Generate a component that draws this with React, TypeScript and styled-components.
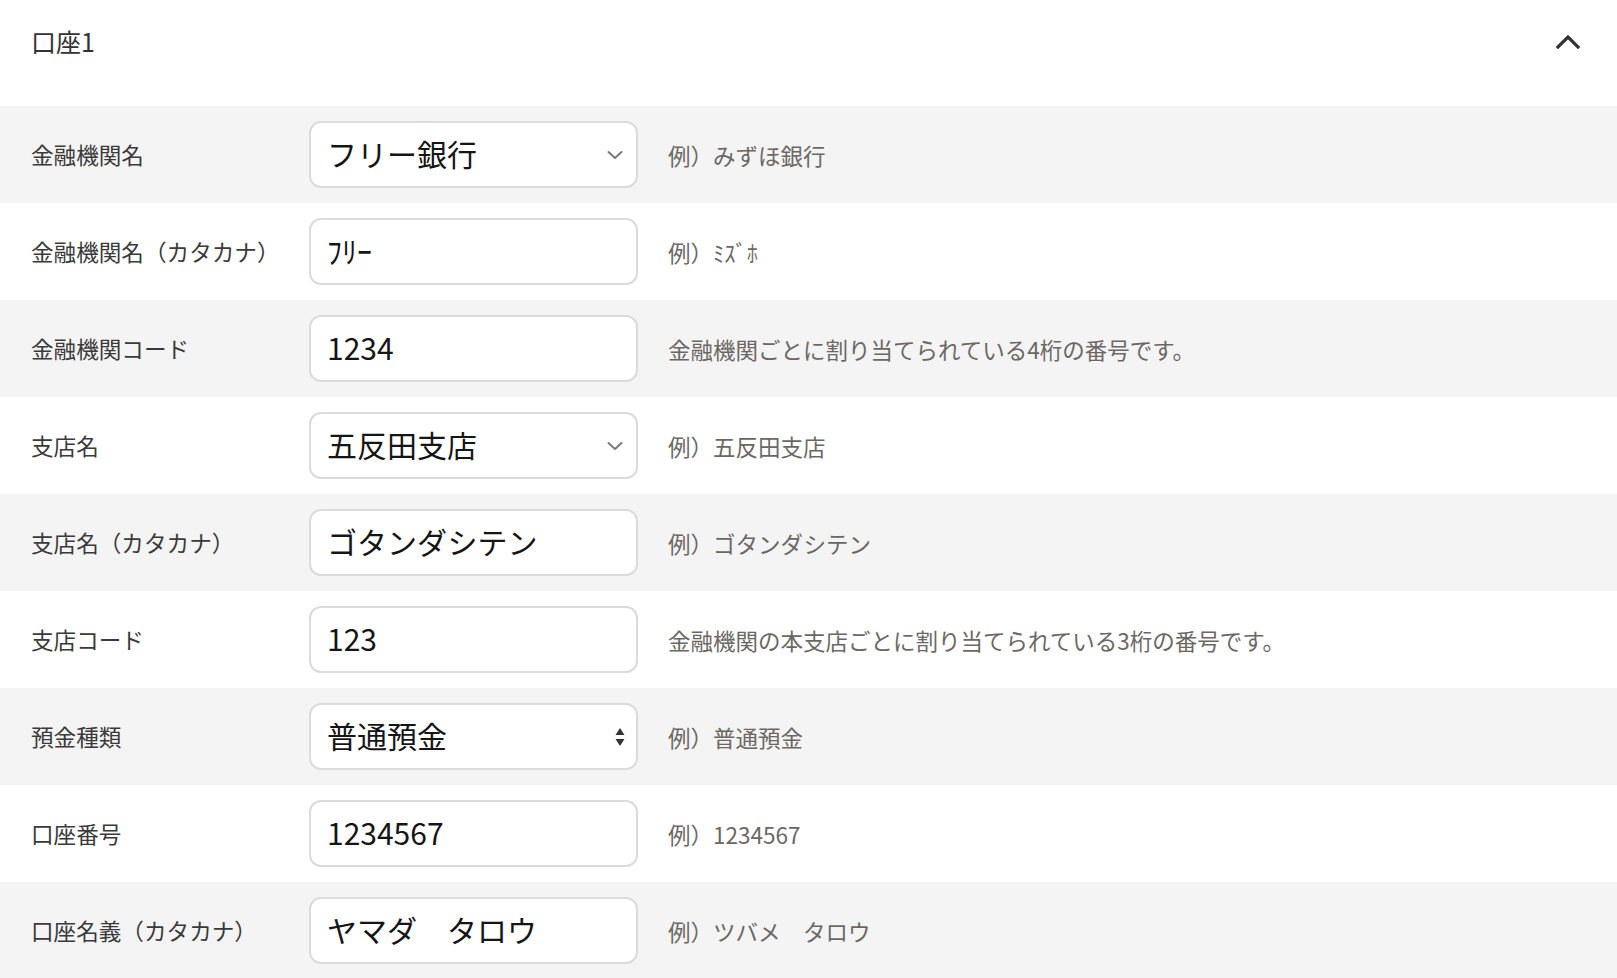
import React from "react";
import styled, { createGlobalStyle } from "styled-components";

const GlobalStyle = createGlobalStyle`
  html, body { margin: 0; padding: 0; background: #ffffff; }
  body {
    font-family: "Noto Sans CJK JP", "Noto Sans", sans-serif;
    color: #333333;
    -webkit-font-smoothing: antialiased;
  }
  * { box-sizing: border-box; }
`;

const Page = styled.div`
  width: 1617px;
  height: 978px;
  overflow: hidden;
  background: #ffffff;
`;

const Header = styled.div`
  display: flex;
  align-items: center;
  justify-content: space-between;
  height: 82px;
  margin-bottom: 24px;
  padding: 0 36px 0 31px;
`;

const Title = styled.h2`
  margin: 0;
  font-size: 25px;
  font-weight: 400;
  color: #333333;
  letter-spacing: 0;
`;

const ToggleButton = styled.button`
  display: flex;
  align-items: center;
  justify-content: center;
  width: 26px;
  height: 26px;
  padding: 0;
  border: none;
  background: transparent;
  cursor: pointer;
  color: #333333;
`;

const Row = styled.div<{ $shaded: boolean }>`
  display: grid;
  grid-template-columns: 278px 329px 1fr;
  align-items: center;
  height: 97px;
  padding-left: 31px;
  background: ${(p) => (p.$shaded ? "#f5f4f4" : "#ffffff")};
`;

const Label = styled.label`
  font-size: 22.6px;
  color: #3a3a3a;
  white-space: nowrap;
`;

const fieldBase = `
  width: 329px;
  height: 67px;
  border: 2px solid #dcdada;
  border-radius: 12px;
  background: #ffffff;
  padding: 0 40px 4px 16px;
  font-family: "Noto Sans CJK JP", "Noto Sans", sans-serif;
  font-size: 30px;
  color: #151515;
  outline: none;
`;

const TextInput = styled.input`
  ${fieldBase}
`;

const SelectWrap = styled.div`
  position: relative;
  width: 329px;
  height: 67px;
`;

const Select = styled.select`
  ${fieldBase}
  appearance: none;
  -webkit-appearance: none;
  display: block;
`;

const SelectIcon = styled.span<{ $right: number }>`
  position: absolute;
  top: 50%;
  right: ${(p) => p.$right}px;
  transform: translateY(-50%);
  display: flex;
  pointer-events: none;
`;

const Hint = styled.div`
  padding-left: 30px;
  font-size: 22.5px;
  color: #6b6864;
  white-space: nowrap;
`;

const ChevronDown = () => (
  <svg width="16" height="9" viewBox="0 0 16 9" fill="none">
    <path d="M1.5 1.5 L8 7.5 L14.5 1.5" stroke="#7a7a7a" strokeWidth="2" strokeLinecap="round" strokeLinejoin="round" />
  </svg>
);

const UpDown = () => (
  <svg width="10" height="20" viewBox="0 0 10 20">
    <path d="M5 1 L9.5 8 L0.5 8 Z" fill="#333333" />
    <path d="M5 19 L9.5 12 L0.5 12 Z" fill="#333333" />
  </svg>
);

const ChevronUp = () => (
  <svg width="24" height="15" viewBox="0 0 24 15" fill="none">
    <path d="M2 13 L12 3 L22 13" stroke="#333333" strokeWidth="3.2" strokeLinecap="square" strokeLinejoin="miter" />
  </svg>
);

type Field =
  | { label: string; kind: "input"; value: string; hint: string }
  | { label: string; kind: "select"; value: string; hint: string; icon: "chevron" | "updown" };

const fields: Field[] = [
  { label: "金融機関名", kind: "select", value: "フリー銀行", hint: "例）みずほ銀行", icon: "chevron" },
  { label: "金融機関名（カタカナ）", kind: "input", value: "ﾌﾘｰ", hint: "例）ﾐｽﾞﾎ" },
  { label: "金融機関コード", kind: "input", value: "1234", hint: "金融機関ごとに割り当てられている4桁の番号です。" },
  { label: "支店名", kind: "select", value: "五反田支店", hint: "例）五反田支店", icon: "chevron" },
  { label: "支店名（カタカナ）", kind: "input", value: "ゴタンダシテン", hint: "例）ゴタンダシテン" },
  { label: "支店コード", kind: "input", value: "123", hint: "金融機関の本支店ごとに割り当てられている3桁の番号です。" },
  { label: "預金種類", kind: "select", value: "普通預金", hint: "例）普通預金", icon: "updown" },
  { label: "口座番号", kind: "input", value: "1234567", hint: "例）1234567" },
  { label: "口座名義（カタカナ）", kind: "input", value: "ヤマダ　タロウ", hint: "例）ツバメ　タロウ" },
];

export default function App() {
  return (
    <Page>
      <GlobalStyle />
      <Header>
        <Title>口座1</Title>
        <ToggleButton aria-label="閉じる">
          <ChevronUp />
        </ToggleButton>
      </Header>
      {fields.map((f, i) => (
        <Row key={f.label} $shaded={i % 2 === 0}>
          <Label>{f.label}</Label>
          {f.kind === "input" ? (
            <TextInput defaultValue={f.value} />
          ) : (
            <SelectWrap>
              <Select defaultValue={f.value}>
                <option value={f.value}>{f.value}</option>
              </Select>
              <SelectIcon $right={f.icon === "updown" ? 13 : 15}>
                {f.icon === "updown" ? <UpDown /> : <ChevronDown />}
              </SelectIcon>
            </SelectWrap>
          )}
          <Hint>{f.hint}</Hint>
        </Row>
      ))}
    </Page>
  );
}
